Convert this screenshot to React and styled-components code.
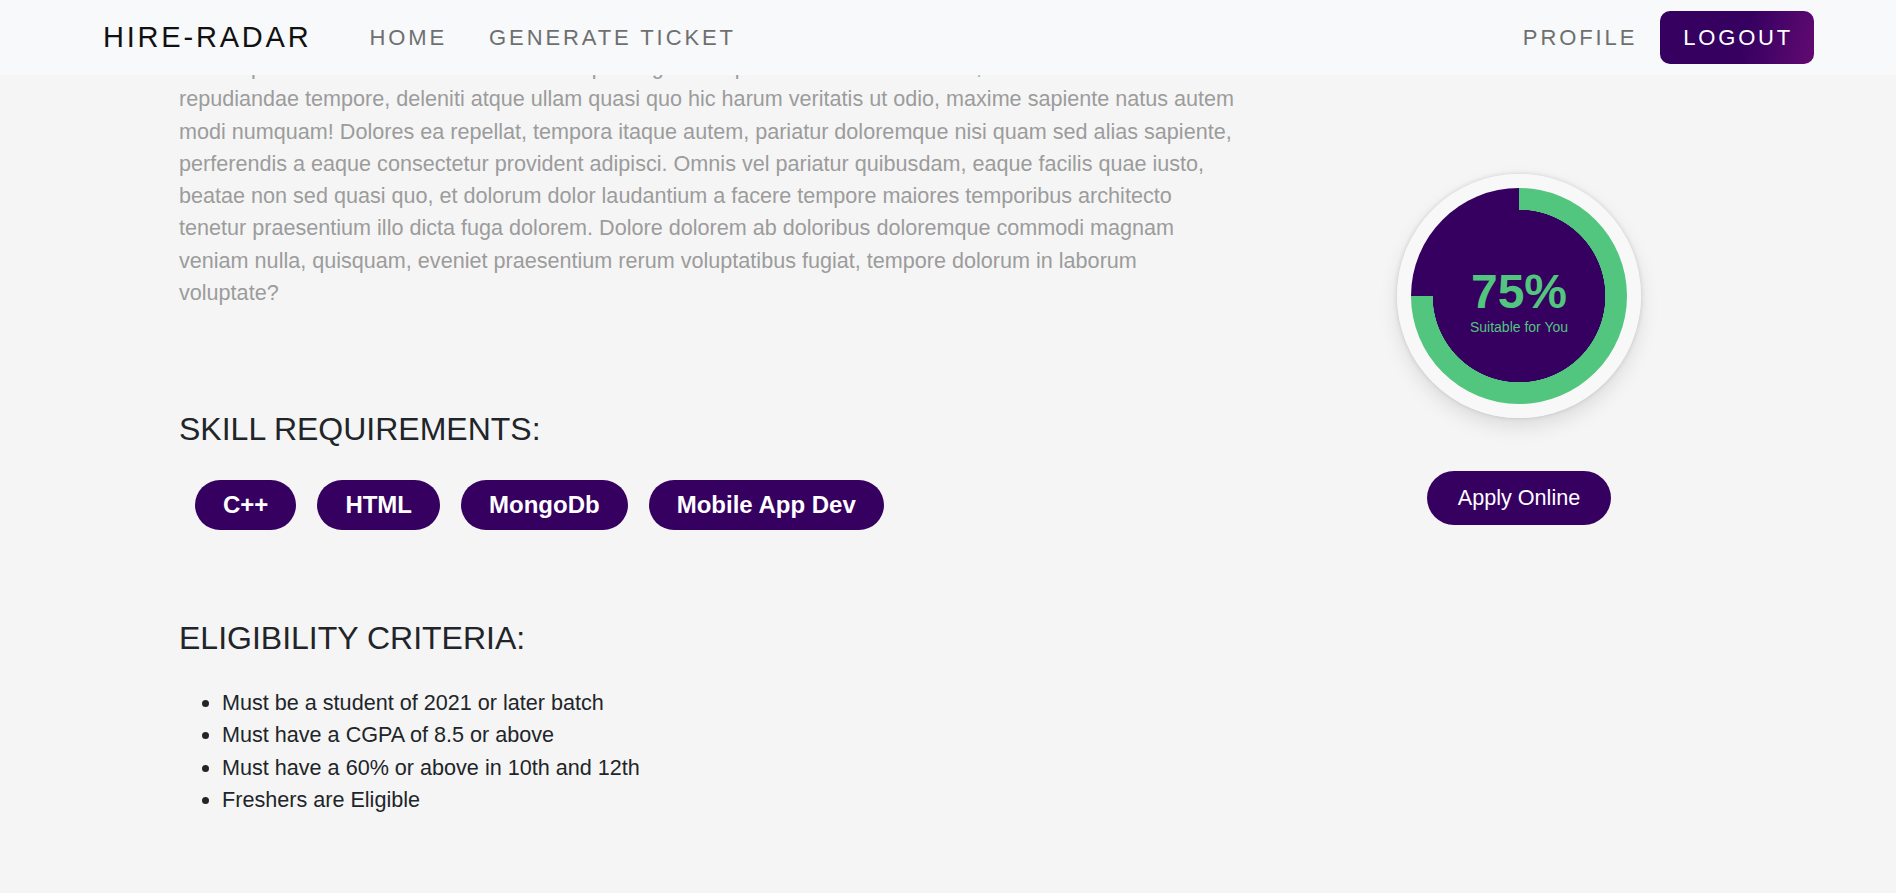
import React from "react";
import styled, { createGlobalStyle } from "styled-components";

const skills = ["C++", "HTML", "MongoDb", "Mobile App Dev"];

const criteria = [
  "Must be a student of 2021 or later batch",
  "Must have a CGPA of 8.5 or above",
  "Must have a 60% or above in 10th and 12th",
  "Freshers are Eligible",
];

const description =
  "Lorem ipsum dolor sit amet consectetur adipisicing elit. Expedita nostrum molestiae, tenetur nihil iste sit repudiandae tempore, deleniti atque ullam quasi quo hic harum veritatis ut odio, maxime sapiente natus autem modi numquam! Dolores ea repellat, tempora itaque autem, pariatur doloremque nisi quam sed alias sapiente, perferendis a eaque consectetur provident adipisci. Omnis vel pariatur quibusdam, eaque facilis quae iusto, beatae non sed quasi quo, et dolorum dolor laudantium a facere tempore maiores temporibus architecto tenetur praesentium illo dicta fuga dolorem. Dolore dolorem ab doloribus doloremque commodi magnam veniam nulla, quisquam, eveniet praesentium rerum voluptatibus fugiat, tempore dolorum in laborum voluptate?";

export default function App() {
  const match = 75;

  return (
    <>
      <GlobalStyle />
      <Navbar>
        <Brand>HIRE-RADAR</Brand>
        <NavLink>HOME</NavLink>
        <NavLink>GENERATE TICKET</NavLink>
        <NavRight>
          <NavLink last>PROFILE</NavLink>
          <LogoutButton>LOGOUT</LogoutButton>
        </NavRight>
      </Navbar>

      <Main>
        <div>
          <Description>{description}</Description>

          <SectionTitle gap={101}>SKILL REQUIREMENTS:</SectionTitle>
          <Skills>
            {skills.map((skill) => (
              <SkillChip key={skill}>{skill}</SkillChip>
            ))}
          </Skills>

          <SectionTitle gap={89}>ELIGIBILITY CRITERIA:</SectionTitle>
          <Criteria>
            {criteria.map((item) => (
              <li key={item}>{item}</li>
            ))}
          </Criteria>
        </div>

        <Side>
          <Gauge>
            <Ring style={{ "--pct": `${match}%` }}>
              <Percent>{match}%</Percent>
              <GaugeLabel>Suitable for You</GaugeLabel>
            </Ring>
          </Gauge>
          <ApplyButton>Apply Online</ApplyButton>
        </Side>
      </Main>
    </>
  );
}

const GlobalStyle = createGlobalStyle`
  * {
    box-sizing: border-box;
  }
  body {
    margin: 0;
    background-color: #f5f5f5;
    font-family: "Liberation Sans", Arial, sans-serif;
    color: #212529;
  }
`;

const Navbar = styled.nav`
  position: fixed;
  top: 0;
  left: 0;
  right: 0;
  z-index: 10;
  height: 75px;
  display: flex;
  align-items: center;
  padding: 0 82px 0 103px;
  background-color: #f8f9fa;
`;

const Brand = styled.div`
  font-size: 29px;
  letter-spacing: 2.8px;
  color: #111;
  margin-right: 58px;
`;

const NavLink = styled.a`
  font-size: 22px;
  letter-spacing: 2.9px;
  color: #6f6f70;
  margin-right: ${(p) => (p.last ? "23px" : "42px")};
  cursor: pointer;
`;

const NavRight = styled.div`
  margin-left: auto;
  display: flex;
  align-items: center;
`;

const LogoutButton = styled.button`
  height: 53px;
  padding: 0 21px 0 23px;
  border: none;
  border-radius: 10px;
  background: linear-gradient(105deg, #360061 55%, #620a72 100%);
  color: #fff;
  font-family: inherit;
  font-size: 22px;
  letter-spacing: 2.8px;
  cursor: pointer;
`;

const Main = styled.main`
  display: grid;
  grid-template-columns: 1058px 564px;
  padding: 51px 0 60px 179px;
`;

const Description = styled.p`
  margin: 0;
  font-size: 21.6px;
  line-height: 32.3px;
  color: #9c9c9c;
`;

const SectionTitle = styled.h2`
  margin: ${(p) => p.gap}px 0 0;
  font-size: 32px;
  font-weight: 400;
  line-height: 1.2;
  color: #212529;
`;

const Skills = styled.div`
  display: flex;
  gap: 21px;
  margin-top: 31px;
  padding-left: 16px;
`;

const SkillChip = styled.span`
  display: flex;
  align-items: center;
  height: 50px;
  padding: 0 28px;
  border-radius: 25px;
  background-color: #360061;
  color: #fff;
  font-size: 24px;
  font-weight: 700;
`;

const Criteria = styled.ul`
  margin: 30px 0 0;
  padding-left: 43px;

  li {
    font-size: 21.6px;
    line-height: 32.3px;
    color: #212529;
  }
`;

const Side = styled.aside`
  display: flex;
  flex-direction: column;
  align-items: center;
  padding-top: 123px;
`;

const Gauge = styled.div`
  width: 244px;
  height: 244px;
  padding: 14px;
  border-radius: 50%;
  background: radial-gradient(circle, #f8f8f8 76%, #dedede 100%);
  box-shadow: 0 9px 20px rgba(0, 0, 0, 0.1), 0 0 5px rgba(0, 0, 0, 0.14);
`;

const Ring = styled.div`
  width: 216px;
  height: 216px;
  border-radius: 50%;
  padding: 11px 0 0;
  display: flex;
  flex-direction: column;
  align-items: center;
  justify-content: center;
  background: radial-gradient(circle, #360061 86px, transparent 86.5px),
    conic-gradient(#52c57e 0 var(--pct), #360061 var(--pct) 100%);
`;

const Percent = styled.div`
  font-size: 48px;
  font-weight: 700;
  line-height: 48px;
  color: #52c57e;
`;

const GaugeLabel = styled.div`
  margin-top: 3px;
  font-size: 14px;
  line-height: 16px;
  color: #52c57e;
`;

const ApplyButton = styled.button`
  margin-top: 53px;
  height: 54px;
  padding: 0 31px;
  border: none;
  border-radius: 27px;
  background-color: #360061;
  color: #fff;
  font-family: inherit;
  font-size: 21.6px;
  cursor: pointer;
`;
